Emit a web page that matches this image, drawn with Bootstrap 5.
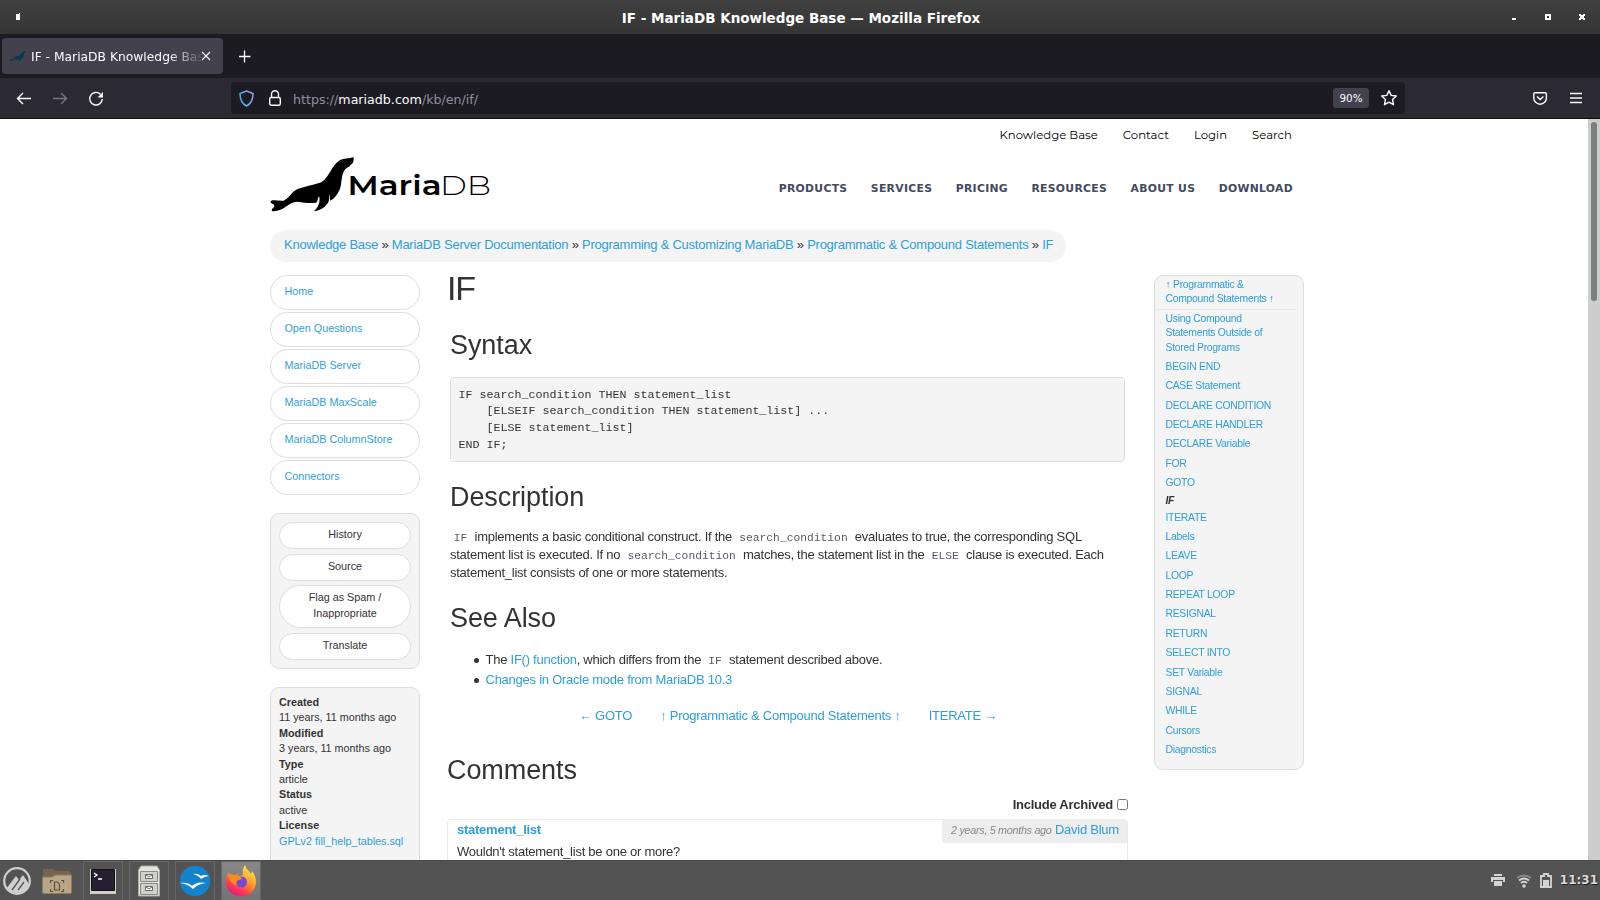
<!DOCTYPE html>
<html lang="en">
<head>
<meta charset="utf-8">
<title>IF - MariaDB Knowledge Base</title>
<link href="https://cdn.jsdelivr.net/npm/bootstrap@5.3.0/dist/css/bootstrap.min.css" rel="stylesheet">
<style>
body{width:1600px;height:900px;font-family:"Liberation Sans",Arial,sans-serif;font-size:13px;letter-spacing:-.25px;line-height:18px;color:#333;background:#fff}
svg{display:block;flex:none}
a{color:#2f9fd8;text-decoration:none}
.ui{font-family:"DejaVu Sans",sans-serif;letter-spacing:0}
.titlebar{height:34px;background:linear-gradient(#404040,#353535);color:#fff;padding:0 14px 0 16px}
.titlebar .caption-text{font-weight:bold;font-size:13.5px;padding:1px 0 0 14px}
.tabstrip{height:44px;background:#1c1b22;padding:4px 2px}
.tab-item{width:221px;height:36px;border-radius:4px;background:#42414d;color:#fbfbfe;padding:0 11px 0 8px;font-size:12.3px}
.tab-label{width:170px;white-space:nowrap;-webkit-mask-image:linear-gradient(90deg,#000 138px,transparent 174px);margin-left:5px;padding-top:2px}
.toolbar{height:41px;background:#2b2a33;border-bottom:1px solid #0c0c0d;padding:4px 18px 4px 16px}
.urlbar{width:1174px;height:32px;background:#1c1b22;border-radius:4px;margin-left:128px;padding:0 7px 0 8px;font-size:12.65px;color:#8f8f9d}
.urlbar b{font-weight:normal;color:#fbfbfe}
.zoomlevel{width:36px;height:20px;border-radius:3px;background:#42414d;color:#fbfbfe;font-size:10.4px;line-height:20px;text-align:center}
.viewport{height:741px;overflow:hidden}
.scrollrail{width:12px;background:#cdcdcd;padding:3px 3px}
.scrollthumb{height:179px;width:6px;border-radius:3px;background:#7b7f80}
.sheet{width:1034px;margin-left:270px}
.topnav{height:32px;gap:25px;padding-right:12px;color:#000;font-family:Montserrat,Inter,sans-serif;font-size:11.7px;letter-spacing:0;line-height:32px}
.brandrow{height:79px}
.mainnav{gap:23.4px;padding:29px 11px 0 0;font-family:"DejaVu Sans",sans-serif;font-weight:bold;font-size:10.8px;color:#424a62;letter-spacing:.32px;line-height:17px}
.crumbs{width:796px;height:32px;border-radius:16px;background:#f4f4f4;padding:6px 0 0 14px;white-space:nowrap}
.side{width:150px;font-size:10.8px;letter-spacing:0}
.navpill{height:35px;border:1px solid #ddd;border-radius:18px;margin-bottom:2px;padding:7px 13.4px;line-height:17px}
.panel{background:#f4f4f4;border:1px solid #ddd;border-top-width:1.5px;border-radius:9px}
.tools{height:156px;margin-top:18px;padding:8px}
.toolbtn{border:1px solid #ddd;border-radius:22px;background:#fff;text-align:center;line-height:16px;padding:3px 10px 6px;width:132px;height:27px;margin-bottom:5px}
.meta{height:220px;margin-top:18px;padding:7px 8px;line-height:15.4px}
.article{width:681px;margin-left:27px;padding-top:6px}
.article h1{font-size:34px;line-height:40px;margin:0 0 22px;letter-spacing:-1.2px}
.article h2{font-size:27px;line-height:30px;margin:0 0 0 3px;letter-spacing:-.08px}
.article h1,.article h2{font-weight:normal}
.codebox{width:675px;height:85px;margin:17px 0 20px 3px;padding:8.5px 7.6px;border:1px solid #ddd;border-radius:4px;background:#f4f4f4;color:#333;font:11.66px/16.7px "Liberation Mono",monospace;letter-spacing:0}
.article code{font:11.3px "Liberation Mono",monospace;color:#555b66;padding:0 3.8px;letter-spacing:0}
.para{width:672px;height:54px;margin:16px 0 21px 3px;white-space:nowrap}
.points{margin:17px 0 16px 3px;padding-left:35.5px;line-height:20px;list-style:none}
.points li::before{content:"";display:inline-block;width:5px;height:5px;border-radius:50%;background:#333;margin:0 6.5px 1px -11.5px}
.pager{gap:28px;height:20px;line-height:20px;margin:0 0 29px 132px}
.archived{height:24px;margin-top:10px;font-weight:bold;line-height:20px}
.archived input{width:11px;height:11px;margin:4px 0 0 4px}
.comment-box{height:90px;border:1px solid #eaeaea;border-radius:4px;padding:0 0 0 9px}
.comment-box>div>a{padding-top:1px}
.stamp{width:185px;height:23px;background:#ededed;border-radius:0 0 0 4px;padding:1px 9px;white-space:nowrap}
.stamp em{font-size:10.8px;color:#888;letter-spacing:-.3px}
.related{width:150px;height:495px;margin:13px 0 0 26px;font-size:10.4px;letter-spacing:-.28px;line-height:14.2px;padding:1.5px 0}
.related div{padding:0 8px 5.16px 10.5px}
.related .uplink{border-bottom:1px solid #e8e8e8;width:141px;padding-bottom:3px;margin-bottom:2.2px}
.related .here{font-weight:bold;font-style:italic;line-height:12px;padding-bottom:4px;margin-top:-.7px}
.taskbar{height:40px;background:#535353;border-top:1px solid #4a4a4a;color:#d9d9d9}
.task{width:40px;height:40px;border:1px solid #666;margin-right:6px;display:flex;align-items:center;justify-content:center}
.task.active{background:linear-gradient(#888,#747474)}
.clock{font-weight:bold;font-size:12px;text-shadow:1px 1px 1px #222;margin:0 2px 2px 8px}
</style>
</head>
<body class="overflow-hidden">
<header class="ui">
 <div class="titlebar d-flex align-items-center justify-content-between">
  <svg width="60" height="34" fill="#fff"><path d="M0 14h3v-1h1v7H0z"/></svg>
  <span class="caption-text">IF - MariaDB Knowledge Base — Mozilla Firefox</span>
  <svg width="74" height="34"><path fill="#fff" d="M0 18h4v2H0zM33 14h6v6h-6zM67 14h2v1h2v-1h2v2h-1v2h1v2h-2v-1h-2v1h-2v-2h1v-2h-1z"/><path fill="#383838" d="M35 16h2v2h-2z"/></svg>
 </div>
 <div class="tabstrip d-flex">
  <div class="tab-item d-flex align-items-center">
   <svg width="16" height="12" viewBox="60 125 252 165"><use href="#seal" fill="#043a4d"/></svg>
   <span class="tab-label">IF - MariaDB Knowledge Bas</span>
   <svg width="10" height="10" stroke="#fbfbfe" stroke-width="1.1"><path d="M1 1l8 8M9 1l-8 8"/></svg>
  </div>
  <svg class="ms-3" width="12" height="36" stroke="#fbfbfe" stroke-width="1.3"><path d="M0 18.5h11.500M5.500 12.500v12"/></svg>
 </div>
 <div class="toolbar d-flex align-items-center">
  <svg width="87" height="32" fill="none" stroke="#fbfbfe" stroke-width="1.4"><path d="M15 16.5H1.7M7 11l-5.5 5.5L7 22"/><path stroke="#77767f" d="M37 16.5h13.3M45 11l5.5 5.5L45 22"/><path d="M84.5 12.3a6.3 6.3 0 1 0 1.8 4.7"/><path fill="#fbfbfe" stroke="none" d="M87 10v5.5h-5.5z"/></svg>
  <div class="urlbar d-flex align-items-center">
   <svg width="15" height="17" viewBox="0 0 15 17" fill="none" stroke-width="1.5"><defs><linearGradient id="sh" x2="1" y2="0"><stop stop-color="#37b8ef"/><stop offset="1" stop-color="#a49cf2"/></linearGradient></defs><path stroke="url(#sh)" d="M7.500 1L14 3.500C14 9 12.500 13.500 7.500 16C2.500 13.500 1 9 1 3.500z"/></svg>
   <svg width="12" height="16" fill="none" stroke="#fbfbfe" stroke-width="1.4" style="margin:0 12px 0 15px"><rect x=".7" y="7.500" width="10.600" height="7.800" rx="1.500"/><path d="M2.500 7.500V4.200a3.500 3.500 0 0 1 7 0v3.300"/></svg>
   <span class="flex-grow-1 pt-1">https://<b>mariadb.com</b>/kb/en/if/</span>
   <span class="zoomlevel">90%</span>
   <svg style="margin-left:11px" width="18" height="18" fill="none" stroke="#fbfbfe" stroke-width="1.4" stroke-linejoin="round"><path d="M9 1.700l2.200 4.700 5.100.6-3.800 3.500 1 5.200L9 13.200l-4.500 2.500 1-5.200L1.700 7l5.100-.6z"/></svg>
  </div>
  <svg class="ms-auto" width="49" height="32" fill="none" stroke="#fbfbfe" stroke-width="1.4"><path d="M2 10.700h10.200q1.200 0 1.200 1.200v4a6.300 6.300 0 0 1-12.600 0v-4q0-1.200 1.200-1.200zM4 14.500l3.200 3 3.200-3"/><path d="M37 11.500h12M37 16h12M37 20.500h12"/></svg>
 </div>
</header>

<main class="viewport d-flex justify-content-between">
 <div class="sheet">
  <nav class="topnav d-flex justify-content-end"><span>Knowledge Base</span><span>Contact</span><span>Login</span><span>Search</span></nav>
  <div class="brandrow d-flex justify-content-between">
   <svg width="225" height="70" viewBox="0 0 225 70">
    <svg x="0" y="6" width="84" height="55" viewBox="60 125 252 165"><path id="seal" d="M311 127C309 125 305 126 302 128C294 130 282 129 272 133C258 140 249 154 242 167C234 180 225 194 214 201C198 207 180 210 163 215C148 219 136 223 129 230C120 240 112 251 101 256C88 258 74 253 64 256C59 259 62 264 70 267C74 270 74 273 70 277C64 281 63 287 70 288C80 287 93 284 103 277C114 269 127 259 143 259C162 262 181 265 198 262C203 261 202 251 207 243C210 250 209 262 204 271C200 280 195 285 191 288C207 287 224 277 231 266C239 260 237 247 239 236C241 244 239 251 241 256C248 254 258 244 265 231C277 213 272 187 281 169C284 162 291 157 299 153C301 146 309 145 310 139C310 135 312 131 311 127z"/></svg>
    <text x="77.500" y="44" font-family="Montserrat,Inter,sans-serif" font-size="27" font-weight="600" textLength="94" letter-spacing="0" lengthAdjust="spacingAndGlyphs">Maria</text>
    <text x="170" y="44" font-family="Montserrat,Inter,sans-serif" font-size="27" font-weight="300" textLength="51" letter-spacing="0" lengthAdjust="spacingAndGlyphs">DB</text>
   </svg>
   <nav class="mainnav d-flex"><span>PRODUCTS</span><span>SERVICES</span><span>PRICING</span><span>RESOURCES</span><span>ABOUT US</span><span>DOWNLOAD</span></nav>
  </div>
  <nav class="crumbs"><a href="#">Knowledge Base</a> » <a href="#">MariaDB Server Documentation</a> » <a href="#">Programming &amp; Customizing MariaDB</a> » <a href="#">Programmatic &amp; Compound Statements</a> » <a href="#">IF</a></nav>
  <div class="d-flex align-items-start">
   <aside class="side" style="padding-top:13px">
    <div class="navpill"><a href="#">Home</a></div>
    <div class="navpill"><a href="#">Open Questions</a></div>
    <div class="navpill"><a href="#">MariaDB Server</a></div>
    <div class="navpill"><a href="#">MariaDB MaxScale</a></div>
    <div class="navpill"><a href="#">MariaDB ColumnStore</a></div>
    <div class="navpill"><a href="#">Connectors</a></div>
    <div class="panel tools">
     <div class="toolbtn">History</div>
     <div class="toolbtn mb-1">Source</div>
     <div class="toolbtn h-auto">Flag as Spam / Inappropriate</div>
     <div class="toolbtn">Translate</div>
    </div>
    <div class="panel meta"><b>Created</b><br>11 years, 11 months ago<br><b>Modified</b><br>3 years, 11 months ago<br><b>Type</b><br>article<br><b>Status</b><br>active<br><b>License</b><br><a href="#">GPLv2 fill_help_tables.sql</a></div>
   </aside>
   <article class="article">
    <h1>IF</h1>
    <h2>Syntax</h2>
<pre class="codebox">IF search_condition THEN statement_list
    [ELSEIF search_condition THEN statement_list] ...
    [ELSE statement_list]
END IF;</pre>
    <h2>Description</h2>
    <p class="para"><code>IF</code> implements a basic conditional construct. If the <code>search_condition</code> evaluates to true, the corresponding SQL<br>statement list is executed. If no <code>search_condition</code> matches, the statement list in the <code>ELSE</code> clause is executed. Each<br>statement_list consists of one or more statements.</p>
    <h2>See Also</h2>
    <ul class="points"><li>The <a href="#">IF() function</a>, which differs from the <code>IF</code> statement described above.</li><li><a href="#">Changes in Oracle mode from MariaDB 10.3</a></li></ul>
    <div class="pager d-flex"><a href="#">← GOTO</a><a href="#">↑ Programmatic &amp; Compound Statements ↑</a><a href="#">ITERATE →</a></div>
    <h2 class="ms-0">Comments</h2>
    <label class="archived d-flex justify-content-end">Include Archived<input type="checkbox"></label>
    <div class="comment-box">
     <div class="d-flex justify-content-between"><a href="#"><b>statement_list</b></a><div class="stamp"><em>2 years, 5 months ago</em> <a href="#">David Blum</a></div></div>
     <div>Wouldn't statement_list be one or more?</div>
    </div>
   </article>
   <aside class="panel related">
    <div class="uplink"><a href="#">↑ Programmatic &amp;<br>Compound Statements ↑</a></div>
    <div><a href="#">Using Compound<br>Statements Outside of<br>Stored Programs</a></div>
    <div><a href="#">BEGIN END</a></div><div><a href="#">CASE Statement</a></div><div><a href="#">DECLARE CONDITION</a></div><div><a href="#">DECLARE HANDLER</a></div><div><a href="#">DECLARE Variable</a></div><div><a href="#">FOR</a></div><div><a href="#">GOTO</a></div>
    <div class="here">IF</div>
    <div><a href="#">ITERATE</a></div><div><a href="#">Labels</a></div><div><a href="#">LEAVE</a></div><div><a href="#">LOOP</a></div><div><a href="#">REPEAT LOOP</a></div><div><a href="#">RESIGNAL</a></div><div><a href="#">RETURN</a></div><div><a href="#">SELECT INTO</a></div><div><a href="#">SET Variable</a></div><div><a href="#">SIGNAL</a></div><div><a href="#">WHILE</a></div><div><a href="#">Cursors</a></div><div><a href="#">Diagnostics</a></div>
   </aside>
  </div>
 </div>
 <div class="scrollrail"><div class="scrollthumb"></div></div>
</main>

<footer class="taskbar ui d-flex align-items-center">
 <svg width="83" height="40" viewBox="0 0 83 40">
  <circle cx="17" cy="20" r="12.800" fill="none" stroke="#cfcfcf" stroke-width="2.200"/><path fill="#cfcfcf" d="M6 28l10-13 3 4 4-5 6 9-2 5q-4 4-10 4T6 28z"/><path d="M12 29l8-11M18 29l6-8" stroke="#555" stroke-width="1.300"/>
  <path fill="#75644e" d="M43 9q0-1 1-1h9l2 2h14q2 0 2 2v10H43z"/><path fill="#b9a688" stroke="#8b7a60" d="M42.500 16h10l2-2h17v17q0 1.500-1.500 1.500H44q-1.500 0-1.500-1.500z"/><path fill="none" stroke="#5e503d" stroke-width="1.200" d="M54.500 21h3l2 2v6h-5zM50.500 22v-2.500h2.500M61 19.500h2.500V22M50.500 28v2.500h2.500M61 30.500h2.500V28"/>
 </svg>
 <div class="task"><svg width="26" height="26"><path fill="#cfd0ca" d="M0 1h26v25H0z"/><path fill="#242032" stroke="#111" d="M1.500 1.500h23v21h-23z"/><path fill="none" stroke="#fff" stroke-width="1.300" d="M4 5l3 2-3 2M8 11h4"/></svg></div>
 <div class="task"><svg width="24" height="32"><path fill="#e2e3dd" stroke="#aaa" d="M4 1h16l2.500 4v26h-21V5z"/><path fill="#d0d1ca" stroke="#888b85" d="M3.500 6.500h17v10h-17zM3.500 18.500h17v11h-17z"/><path fill="#fff" stroke="#666" d="M8.500 9.500h7v4h-7zM8.500 21.500h7v4h-7z"/><path stroke="#666" fill="none" d="M9 10l3 2 3-2M9 22l3 2 3-2"/></svg></div>
 <div class="task"><svg width="32" height="32"><circle cx="16" cy="16" r="15.200" fill="#1583cb"/><path fill="#fff" d="M14 9q5-1 8 2 3-2 8 0-4 0-8 3-3-4-8-5zM1 18q8-1 12 3 5-5 14-3-8 1-13 6-5-5-13-6z"/></svg></div>
 <div class="task active"><svg width="32" height="32" viewBox="0 0 32 32"><defs><linearGradient id="ff" x1=".8" y1=".1" x2=".3" y2="1"><stop stop-color="#ffe34a"/><stop offset=".45" stop-color="#ff9526"/><stop offset=".75" stop-color="#ff3a50"/><stop offset="1" stop-color="#e31587"/></linearGradient></defs><path fill="url(#ff)" d="M20 0q1 4 4 6 1 2 2 3l1-3q4 5 4 11 0 6-4 10-5 4-11 4T5 27q-4-4-4-10 0-6 3-10l1 4h5l3-3-1 4 6-2q-1-6 2-10z"/><circle cx="16.500" cy="17" r="5.500" fill="#7549d8"/><path fill="#ff8b20" d="M3 9l8 1 6 3q-1 2-4 2-3 3-1 6-7-2-9-12z"/></svg></div>
 <svg class="ms-auto" width="62" height="40" viewBox="0 1 62 40" fill="#d3d3d3"><path d="M4 14h8v2H4zM1 17h14v5h-2v-2H3v2H1zM4 21h8v5H4z"/><path fill="none" stroke="#8b8b8b" stroke-width="1.800" d="M27 18q7-5 14 0"/><path fill="none" stroke="#d3d3d3" stroke-width="1.800" d="M29 20.500q5-4 10 0M31 23q3-2.500 6 0"/><circle cx="34" cy="26" r="1.800"/><path fill="none" stroke="#d3d3d3" stroke-width="1.800" d="M51 16h3v-2h4v2h3v11H51z"/><path d="M53 20h6v6h-6z"/></svg>
 <span class="clock">11:31</span>
</footer>
<script src="https://cdn.jsdelivr.net/npm/bootstrap@5.3.0/dist/js/bootstrap.bundle.min.js"></script>
</body>
</html>
